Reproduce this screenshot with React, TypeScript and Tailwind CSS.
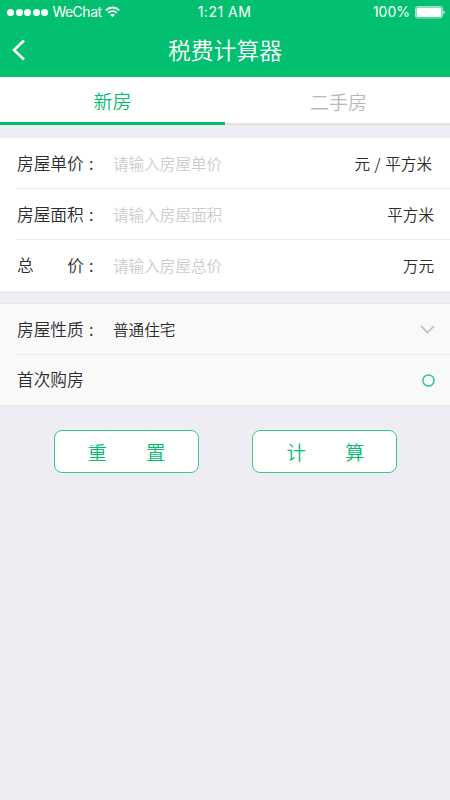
import React, { useState } from 'react'

const GREEN_TEXT = 'text-[#04be6e]'

interface FieldProps {
  label: React.ReactNode
  placeholder: string
  unit: string
  unitClass: string
  last?: boolean
}

const Label: React.FC<{ children: React.ReactNode }> = ({ children }) => (
  <span className="flex w-24 shrink-0 pl-px text-[16.7px] text-[#2c2c2c]">
    <span className="flex w-[67px] shrink-0 justify-between whitespace-nowrap">{children}</span>
    <span className="ml-[5px]">:</span>
  </span>
)

const Field: React.FC<FieldProps> = ({ label, placeholder, unit, unitClass, last }) => (
  <div className={`ml-4 flex h-[51px] items-center pt-px ${last ? '' : 'border-b border-[#ebebeb]'}`}>
    <Label>{label}</Label>
    <input
      className="w-40 bg-transparent pl-px text-[15.6px] text-[#2c2c2c] outline-none placeholder:text-[#cbcbcb]"
      placeholder={placeholder}
    />
    <span className={`ml-auto whitespace-pre text-[15.6px] text-[#2c2c2c] ${unitClass}`}>{unit}</span>
  </div>
)

const StatusBar: React.FC = () => (
  <div className="flex h-6 items-center font-['Inter',sans-serif] text-[14px] font-normal leading-6">
    <div className="flex flex-1 items-center">
      <div className="ml-[7px] flex gap-[1.6px]">
        {[0, 1, 2, 3, 4].map(i => (
          <span key={i} className="size-[7px] rounded-full bg-white" />
        ))}
      </div>
      <span className="ml-1 tracking-[-0.5px]">WeChat</span>
      <svg className="ml-[3px]" width="15" height="12" viewBox="0 0 15 12" fill="none" stroke="#fff" strokeWidth="1.9">
        <path d="M0.8 4.3C4.6 0.5 10.4 0.5 14.2 4.3" />
        <path d="M3.3 6.8C5.7 4.5 9.3 4.5 11.7 6.8" />
        <path d="M5.1 8.7C6.5 7.4 8.5 7.4 9.9 8.7L7.5 11.2Z" fill="#fff" stroke="none" />
      </svg>
    </div>
    <span className="pl-1 tracking-[0.5px]">1:21 AM</span>
    <div className="flex flex-1 items-center justify-end pr-[5px]">
      <span className="mr-[5px]">100%</span>
      <svg width="30" height="13" viewBox="0 0 30 13">
        <rect x="0.5" y="0.5" width="27" height="11.5" rx="2" fill="none" stroke="#fff" strokeOpacity="0.6" />
        <rect x="1.5" y="1.5" width="25" height="9.5" rx="1" fill="#fff" />
        <path d="M28.5 4.2C30 4.8 30 7.7 28.5 8.3Z" fill="#fff" />
      </svg>
    </div>
  </div>
)

export default function App() {
  const [tab, setTab] = useState(0)
  const [first, setFirst] = useState(false)

  const tabClass = (active: boolean) =>
    `w-[225px] shrink-0 pt-1 text-[19px] ${active ? `border-b-[3px] border-[#04be6e] ${GREEN_TEXT}` : 'border-b-2 border-[#e1e1e1] pl-0.5 text-[#b9b9b9]'}`

  return (
    <div className="h-[800px] w-[450px] overflow-hidden bg-[#eeedf3] font-['Noto_Sans_CJK_SC',sans-serif] font-[350]">
      <header className="h-[77px] bg-[#03c070] text-white">
        <StatusBar />
        <div className="flex h-[53px] items-center">
          <svg className="mb-0.5 ml-3" width="14" height="22" viewBox="0 0 14 22" fill="none" stroke="#fff" strokeWidth="2.6">
            <path d="M12 1.5L2 11L12 20.5" />
          </svg>
          <h1 className="mr-[26px] flex-1 text-center text-[22.8px]">税费计算器</h1>
        </div>
      </header>

      <nav className="flex h-12 bg-white">
        <button className={tabClass(tab === 0)} onClick={() => setTab(0)}>新房</button>
        <button className={tabClass(tab === 1)} onClick={() => setTab(1)}>二手房</button>
      </nav>

      <section className="mt-[13px] bg-white">
        <Field label="房屋单价" placeholder="请输入房屋单价" unit="元 / 平方米" unitClass="mr-[18px] [word-spacing:1px]" />
        <Field label="房屋面积" placeholder="请输入房屋面积" unit="平方米" unitClass="mr-4" />
        <Field label={<><span>总</span><span>价</span></>} placeholder="请输入房屋总价" unit="万元" unitClass="mr-4" last />
      </section>

      <section className="mt-3 border-y border-[#e7e7ea] bg-[#f9f9f9]">
        <div className="ml-4 flex h-[51px] items-center border-b border-[#ebebeb]">
          <div className="flex items-center pt-px">
            <Label>房屋性质</Label>
            <span className="pl-px text-[15.6px] text-[#2c2c2c]">普通住宅</span>
          </div>
          <svg className="ml-auto mr-[15px]" width="15" height="9" viewBox="0 0 15 9" fill="none" stroke="#bdbdc0" strokeWidth="1.7">
            <path d="M1 1L7.5 7.5L14 1" />
          </svg>
        </div>
        <div className="ml-4 flex h-[50px] items-center text-[16.7px] text-[#2c2c2c]">
          <span className="pl-px">首次购房</span>
          <button className="ml-auto mr-[15px]" onClick={() => setFirst(!first)}>
            <svg width="13" height="13" viewBox="0 0 13 13" fill={first ? '#2acb86' : 'none'} stroke="#2acb86" strokeWidth="1.5">
              <circle cx="6.5" cy="6.5" r="5.6" />
            </svg>
          </button>
        </div>
      </section>

      <div className={`mt-6 flex gap-[53px] pl-[54px] text-[19.4px] ${GREEN_TEXT}`}>
        <button className="flex h-[43px] w-[145px] items-center justify-center gap-[39px] rounded-lg border-[1.5px] border-[#35c987] bg-white">
          <span>重</span>
          <span>置</span>
        </button>
        <button className="flex h-[43px] w-[145px] items-center justify-center gap-[39px] rounded-lg border-[1.5px] border-[#35c987] bg-white pl-0.5">
          <span>计</span>
          <span>算</span>
        </button>
      </div>
    </div>
  )
}
